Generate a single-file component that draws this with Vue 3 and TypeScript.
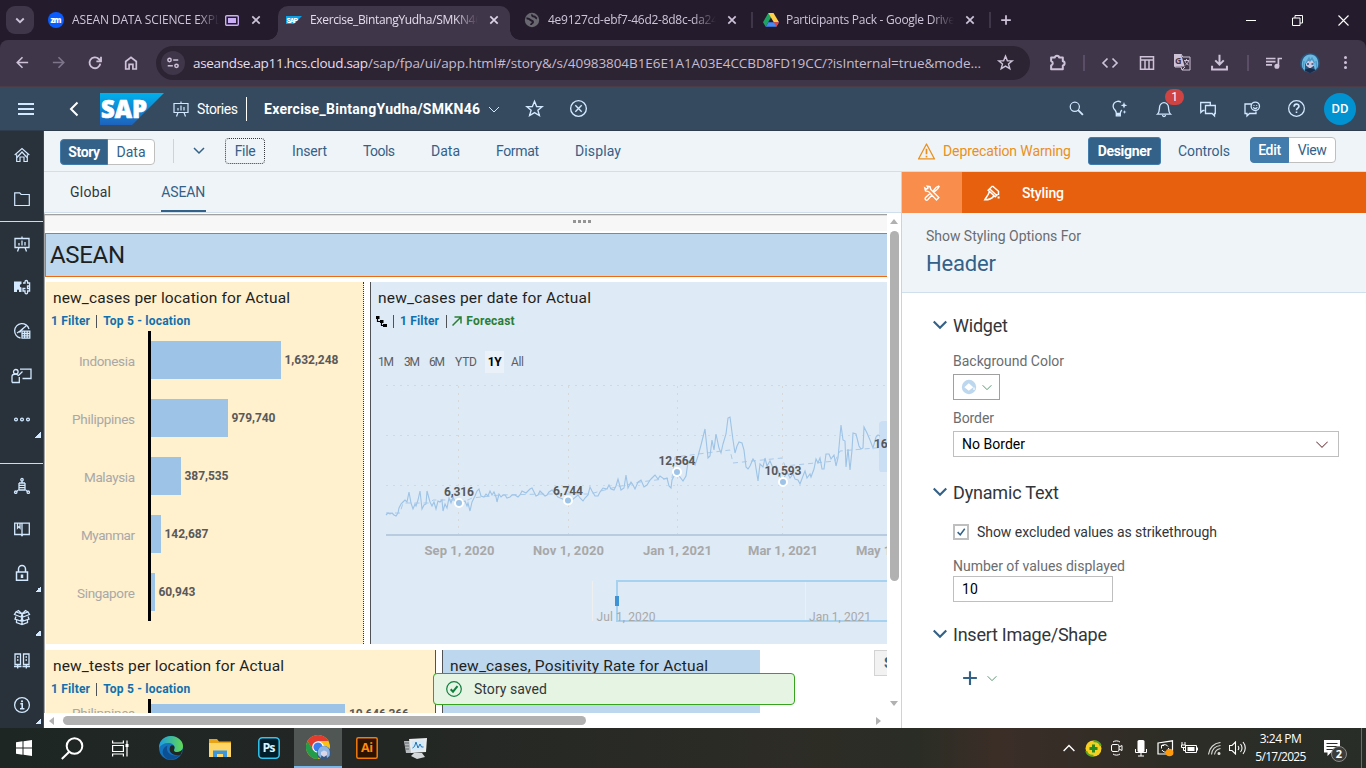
<script setup lang="ts">
import { h, type Directive } from 'vue'

/* Spreads the letters of a label over a given width in pixels. */
const vFit: Directive<HTMLElement, number> = {
  mounted(el, { value }) {
    const range = document.createRange()
    range.selectNodeContents(el)
    const natural = range.getBoundingClientRect().width
    const gaps = Math.max(1, (el.textContent ?? '').trim().length - 1)
    el.style.letterSpacing = `${((value - natural) / gaps).toFixed(3)}px`
  },
}

const glyphs: Record<string, string> = {
  chevron: '<path d="M3 6l5 5 5-5"/>',
  close: '<path d="M4.300 4.300l7.400 7.400M11.700 4.300l-7.400 7.400"/>',
  plus: '<path d="M8 2.500v11M2.500 8h11"/>',
  left: '<path d="M14 8H2.600M8 2.400L2.400 8 8 13.600"/>',
  right: '<path d="M2 8h11.400M8 2.400L13.600 8 8 13.600"/>',
  reload: '<path d="M13.300 8.600A5.400 5.400 0 1 1 11.800 4l2 2"/><path d="M14 1.800V6.400H9.400"/>',
  home: '<path d="M2.700 6.500L8 2.300l5.300 4.200V14h-3.400V9.300H6.100V14H2.700z"/>',
  tune: '<circle cx="4" cy="4.600" r="1.900"/><path d="M8.200 4.600H14"/><circle cx="12" cy="11.200" r="1.900"/><path d="M2 11.200h5.800"/>',
  star: '<path d="M8 1.200l2 4.900 5.200.2-4 3.300 1.400 5L8 11.800l-4.600 2.800 1.400-5-4-3.300L6 6.100z"/>',
  puzzle: '<path d="M2 3.300h3.500a2 1.700 0 0 1 4 0H13v3.500a1.700 2 0 0 1 0 4V14.300H2v-3.500a2.200 2.200 0 0 0 0-4.200z" stroke-linejoin="round"/>',
  code: '<path d="M5.500 3.500L1 8l4.500 4.500M10.500 3.500L15 8l-4.500 4.500"/>',
  layout: '<path d="M1.500 1.800h13v12.500h-13zM1.500 5h13M6 5v9.300M10 5v9.300"/>',
  download: '<path d="M8 .6v9M4 6l4 4 4-4M1 11v3.500h14V11"/>',
  playlist: '<path d="M0 3.500h9.500M0 6.700h9.500M0 9.900h6M12.400 11V3.500H16"/><circle cx="10.900" cy="11.300" r="1.700" fill="currentColor"/>',
  dots: '<g fill="currentColor" stroke="none"><circle cx="8" cy="2.700" r="1.600"/><circle cx="8" cy="8" r="1.600"/><circle cx="8" cy="13.300" r="1.600"/></g>',
  menu: '<path d="M0 3h16M0 8h16M0 13h16"/>',
  back: '<path d="M11.500 1.500L5 8l6.500 6.500"/>',
  board: '<path d="M1 2.500h14v9H1zM8 .500v2M5 11.500L3.500 15.500M11 11.500l1.500 4M5 9.500V7M8 9.500v-5M11 9.500V6"/>',
  circlex: '<circle cx="8" cy="8" r="7.400"/><path d="M5 5l6 6M11 5l-6 6"/>',
  search: '<circle cx="6.200" cy="6.200" r="4.900"/><path d="M9.800 9.800l5 5" stroke-width="2"/>',
  bulb: '<path d="M9 1.300A4.800 4.800 0 0 0 3 9c1 1.200 1.300 1.800 1.300 3.400h4C8.300 11 9 10 9.800 9M4.300 12.400v2.400h4v-2.400"/><path d="M12 1l.9 2.400 2.400.9-2.400.9L12 7.600l-.9-2.400-2.400-.9 2.400-.9zM12.500 9l.5 1.500 1.500.5-1.500.5-.5 1.500-.5-1.500-1.500-.5 1.500-.5z" fill="currentColor" stroke="none"/><path d="M4.300 13.600h4" stroke-width="2"/>',
  bell: '<path d="M1.500 13.200C3.500 11.500 3.300 9 3.500 6.500A4.500 4.800 0 0 1 12.500 6.500C12.700 9 12.500 11.500 14.500 13.200zM6.500 14c0 2 3 2 3 0"/>',
  chat: '<path d="M4.500 9.500H3L.8 11.500V9.500H.7v-8h9.600V4M5.500 4.500h9.800v8h-.8v2.400l-2.400-2.400H5.500z"/>',
  feedback: '<path d="M7.500 3H1v9.500h2V15l2.500-2.500H12V10.500"/><circle cx="11.300" cy="5.300" r="4.200"/><path d="M9.300 6.200c.8 1.700 3.200 1.700 4 0M10 4v.8M12.600 4v.8"/>',
  help: '<circle cx="8" cy="8" r="7.400"/><path d="M5.700 6.300C5.700 3 10.400 3.200 10.300 6 10.200 7.600 8 7.600 8 9.600M8 10.800v1.500" stroke-width="1.500"/>',
  house: '<path d="M.7 8L8 1.500 15.300 8M2.700 7.500V14.500H6v-4.500h4v4.500h3.300V7.500"/><path d="M3 10.500L8 5l5 5.500"/>',
  folder: '<path d="M.7 1.800h5l1.400 1.700h8.200v11H.7z"/>',
  parts: '<path d="M0 2.500h7.500V5a1.700 1.700 0 1 0 0 3.400v4.600H5v-1.500a1 1 0 0 0-2 0V13H0z" fill="currentColor" stroke="none"/><path d="M9 4h2V2.800a1.300 1.300 0 0 1 2.600 0V4h2v8h-2v1.500a1.300 1.300 0 0 1-2.600 0V12H9V9.500h2.500M15.500 7h-2v2.500h2"/>',
  gauge: '<path d="M15 6A7.300 7.300 0 1 0 6.500 15M3 10l3-2 6-5M5.500 9.500L9 5.500"/><path d="M8 8.200h7.800v7H8zM8 10.500h7.800M8 12.800h7.800M10.600 8.200v7M13.200 8.200v7"/>',
  present: '<path d="M6 2.200h11v9.300H8.500M-2 15.500V9.500C-2 7.500 0 7 2 7L4.500 8.500 8.500 4.500M5.300 10v5.500H-2"/><circle cx="1.800" cy="4.800" r="2.300"/>',
  more: '<circle cx="2" cy="8.500" r="1.400"/><circle cx="8" cy="8.500" r="1.400"/><circle cx="14" cy="8.500" r="1.400"/>',
  model: '<circle cx="8" cy="1.700" r="1.200"/><path d="M8 3v1.500M5 5h6M4.700 7.300h6.600M4.700 9.600h6.600M5 12h6M5 5v7M11 5v7M4.500 12l-2 1.500M11.500 12l2 1.500"/><circle cx="1.700" cy="14.200" r="1.200"/><circle cx="14.300" cy="14.200" r="1.200"/>',
  book: '<path d="M8 2.200H.7v11.300H7l1 1.200 1-1.200h6.300V2.200zV14M3.500 2.200v5l1.300-1.300L6 7.200v-5"/>',
  lock: '<path d="M2.500 7h11v8.200h-11zM4.500 7V4a3.500 3.500 0 0 1 7 0v3" stroke-width="1.500"/><path d="M8 9.500v3.500" stroke-width="2.500"/>',
  box: '<path d="M8 5L2 3 .500 5.500 7 8l1-3 1 3 6.500-2.500L14 3zM8 5L4.500 1.500 2 3M8 5l3.500-3.500L14 3M2 7.500l-1 2.500 5.800 2L8 8.500 9.200 12 15 10l-1-2.500M2.500 11v2.500L8 15.500l5.500-2V11M8 8.500v7"/>',
  servers: '<path d="M1 1h5.500v10.500H1zM9.500 1H15v10.500H9.500zM3 4h1.500M3 7h1.500M11.500 4H13M11.500 7H13M0 13.500h7.500M8.500 13.500H16M3.700 11.500V15.500M12.300 11.500v4"/>',
  info: '<circle cx="8" cy="8" r="7.400"/><path d="M6.300 6.800H8.200V11.500M6 11.800h4.400" stroke-width="1.600"/><circle cx="8" cy="4.300" r="1.100" fill="currentColor" stroke="none"/>',
  warning: '<path d="M8 .9L15.500 15H.5z" stroke-linejoin="round"/><path d="M8 5.500v5M8 12v1.600" stroke-width="1.600"/>',
  tools: '<path d="M4.600 6.600L1.500 6 .8 3l1.800 1.200L4 3 3.200 1.200 6 1.700l.8 2.800 8 8-2.300 2.500zM9 6.300l3-3.800L14.600 1l.5.500L13.500 4 9.800 7.200M6.300 8.300l-5 4.500c-.8 1.300.9 3 2.200 2.200L8 10"/>',
  brush: '<path d="M8.500 1L4.200 5.200l7 6.500 2.300-2.300M8.500 1l6 5.300V10M5.500 6.500C4.500 10 2.500 11.800.8 14.800 4 14.800 8 14 9.800 11M5.500 3.800l7 6.500"/><path d="M14.600 11.500v2" stroke-width="2"/>',
  check: '<path d="M3.500 8.200L7 11.700l6-8"/>',
  fill: '<circle cx="8" cy="8" r="7.200" fill="#bdd7ee" stroke="none"/><path d="M3.300 8.300l4.500-4 4.500 4-4.500 3.500z" fill="#fff" stroke="none"/><path d="M13 8.500v2.500" stroke="#fff"/>',
}

interface IconProps { n: string; s?: number; w?: number }
const Icon = (p: IconProps) =>
  h('svg', {
    class: 'icon', width: p.s ?? 16, height: p.s ?? 16, viewBox: '0 0 16 16', fill: 'none',
    stroke: 'currentColor', 'stroke-width': p.w ?? 1.2, overflow: 'visible', innerHTML: glyphs[p.n],
  })
Icon.props = { n: String, s: Number, w: Number }

const sideTop = ['house', 'folder']
const sideMid = ['board', 'parts', 'gauge', 'present', 'more']
const sideLow = ['model', 'book', 'lock', 'box', 'servers', 'info']
const flyouts = ['more', 'lock', 'box', 'info']

const bars = [
  { name: 'Indonesia', value: '1,632,248', size: 130, lw: 56, vw: 54 },
  { name: 'Philippines', value: '979,740', size: 77, lw: 63, vw: 44 },
  { name: 'Malaysia', value: '387,535', size: 30, lw: 51, vw: 44 },
  { name: 'Myanmar', value: '142,687', size: 10, lw: 54, vw: 44 },
  { name: 'Singapore', value: '60,943', size: 4, lw: 58, vw: 37 },
]

const series =
  '386,515 388,513 390,514 392,513 394,515 396,516 398,513 399,508 401,504 403,502 405,500 407,502 409,492 411,503 413,509 415,504 416,506 418,500 420,491 422,509 424,505 426,504 427,491 430,502 432,506 434,502 436,509 438,501 440,502 442,500 443,511 445,504 447,508 449,498 451,503 453,497 456,504 459,503 462,502 465,501 467,506 468,503 470,511 472,502 475,496 477,491 479,489 481,496 484,497 486,494 488,496 490,491 492,495 494,492 496,497 497,502 499,494 501,497 503,495 505,495 507,498 510,497 512,495 515,495 518,497 520,495 522,491 524,492 526,493 528,491 530,489 532,488 534,492 536,496 538,495 540,491 542,493 545,496 547,495 549,492 552,490 558,497 565,500 572,500 578,495 580,498 583,501 585,498 588,495 590,487 592,491 595,496 598,496 600,492 603,488 607,489 609,485 611,489 614,490 616,486 618,479 621,490 624,488 626,475 628,488 631,482 633,485 635,489 638,482 641,480 644,487 647,485 650,480 652,478 655,475 658,479 660,476 664,479 667,478 669,486 671,488 672,480 675,474 677,472 680,477 683,481 686,476 688,462 691,460 695,465 698,456 701,445 703,437 705,429 708,458 710,456 712,440 714,450 716,434 719,448 721,453 723,444 726,434 728,418 730,417 733,440 735,453 737,446 739,442 742,443 744,450 746,467 748,469 750,466 753,459 755,462 758,481 760,464 763,467 765,458 767,466 770,461 773,468 776,466 779,473 782,481 784,478 787,472 790,478 793,474 795,479 798,480 800,484 803,476 805,471 807,478 810,474 811,477 814,469 816,459 818,463 820,458 822,469 824,469 826,454 829,454 831,459 834,455 836,466 838,458 841,425 843,440 845,441 846,467 848,449 850,470 852,450 853,433 856,434 859,446 861,449 863,448 864,427 867,433 870,440 873,448 876,437 878,435 880,436'
const average =
  '386,513 400,513 403,503 430,503 433,500 468,500 472,498 500,495 545,494 590,494 612,488 640,482 672,478 675,457 730,450 733,463 782,458 785,466 835,461 840,451 887,447'

const markers = [
  { x: 459, y: 503, label: '6,316', by: 496, w: 30 },
  { x: 568, y: 500.5, label: '6,744', by: 494.5, w: 30 },
  { x: 677, y: 472, label: '12,564', by: 465, w: 37 },
  { x: 783, y: 482, label: '10,593', by: 475, w: 37 },
]
const months = [
  { x: 424.5, label: 'Sep 1, 2020', w: 70 },
  { x: 533, label: 'Nov 1, 2020', w: 71 },
  { x: 643, label: 'Jan 1, 2021', w: 69 },
  { x: 748, label: 'Mar 1, 2021', w: 70 },
  { x: 856, label: 'May 1, 2021', w: 71 },
]
const menus = [
  { t: 'Insert', w: 35 }, { t: 'Tools', w: 32 }, { t: 'Data', w: 29 }, { t: 'Format', w: 43 }, { t: 'Display', w: 46 },
]
</script>

<template>
  <div class="screen">
    <header class="tabs">
      <div class="tab-search"><Icon n="chevron" :s="12" :w="2.4" /></div>
      <svg width="16" height="16" viewBox="0 0 16 16"><circle cx="8" cy="8" r="8" fill="#0b5cff" /><text x="2.500" y="10.500" class="zm" textLength="11">zm</text></svg>
      <span class="tab-text"><span v-fit="149">ASEAN DATA SCIENCE EXPL</span></span>
      <svg width="14" height="11" viewBox="0 0 14 11"><rect x=".7" y=".7" width="12.600" height="9.600" rx="1" fill="none" stroke="#c9aef5" stroke-width="1.400" /><rect x="3" y="3" width="8" height="5" fill="#c9aef5" /></svg>
      <Icon n="close" :s="16" :w="1.7" />
      <div class="tab-active">
        <svg width="16" height="8" viewBox="0 0 16 8"><path d="M0 0h16L8 8H0z" fill="#0aa0e8" /><text x=".5" y="6.500" class="mini-sap" textLength="11.500">SAP</text></svg>
        <span class="tab-text"><span v-fit="172">Exercise_BintangYudha/SMKN46</span></span>
        <Icon n="close" :s="16" :w="1.7" />
      </div>
      <svg width="16" height="16" viewBox="0 0 16 16"><circle cx="8" cy="8" r="7.200" fill="#696770" /><path d="M2.500 6.500c2-.5 3 .5 4 1.500s2.500.5 2.500 2-2 1-2 3M8.500 2.500c-1 1 0 2 1.500 2s1 1.500 3 2" stroke="#241c2c" stroke-width="2" fill="none" /></svg>
      <span class="tab-text"><span v-fit="170">4e9127cd-ebf7-46d2-8d8c-da24</span></span>
      <Icon n="close" :s="16" :w="1.7" />
      <i class="tab-line"></i>
      <svg width="16" height="14" viewBox="0 0 16 14"><path d="M5.300 0h5.200L5.200 9.300 2.700 13.800 0 9.300z" fill="#1ea362" /><path d="M5.300 0h5.200L16 9.300h-5.200z" fill="#ffcf48" /><path d="M5.200 9.300H16l-2.700 4.500H2.700z" fill="#4688f4" /><path d="M10.800 9.300H16l-2.700 4.500z" fill="#ea4335" /></svg>
      <span class="tab-text"><span v-fit="169">Participants Pack - Google Drive</span></span>
      <Icon n="close" :s="16" :w="1.7" />
      <i class="tab-line"></i>
      <Icon n="plus" :s="14" :w="2" />
      <svg width="10" height="10"><path d="M0 5.500h10" stroke="#fff" /></svg>
      <svg width="11" height="11" fill="none" stroke="#fff"><path d="M.5 3h7.500v7.500H.5zM3 3V.5h7.500V8H8" /></svg>
      <svg width="11" height="11" fill="none" stroke="#fff" stroke-width="1.100"><path d="M.5.5l10 10M10.500.5l-10 10" /></svg>
    </header>

    <div class="browser">
      <Icon n="left" :s="15" :w="1.7" />
      <Icon n="right" :s="15" :w="1.7" class="dim" />
      <Icon n="reload" :s="16" :w="1.8" />
      <Icon n="home" :s="16" :w="1.7" />
      <div class="omnibox">
        <i class="site"><Icon n="tune" :s="14" :w="1.7" /></i>
        <span class="host" v-fit="175">aseandse.ap11.hcs.cloud.sap</span>
        <span class="path" v-fit="613">/sap/fpa/ui/app.html#/story&amp;/s/40983804B1E6E1A1A03E4CCBD8FD19CC/?isInternal=true&amp;mode...</span>
        <Icon n="star" :s="15" :w="1.5" />
      </div>
      <Icon n="puzzle" :s="17" :w="1.9" />
      <i class="tool-line"></i>
      <Icon n="code" :s="16" :w="1.7" />
      <Icon n="layout" :s="16" :w="1.5" />
      <svg width="17" height="17" viewBox="0 0 17 17"><path d="M1 0h6l1.800 3h7.200v13H8l-1-3H1z" fill="none" stroke="#cdc2d8" /><path d="M0 0h7l3.700 12.500H0z" fill="#cdc2d8" /><text x="1" y="9.500" class="g-letter">G</text><path d="M10 6.500h5M12.500 5v1.500M11 7c.5 2 2 3.500 3.500 4M14.500 7c-.5 2-2 3.500-3 4M8 16l3-3" stroke="#cdc2d8" fill="none" /></svg>
      <Icon n="download" :s="17" :w="1.9" />
      <i class="tool-line"></i>
      <Icon n="playlist" :s="16" :w="1.700" />
      <svg width="20" height="20" viewBox="0 0 20 20"><circle cx="10" cy="10" r="10" fill="#27557f" /><path d="M2 14C1 5 6 1 11 1.500c6 .5 8 6 7 12l-3 4-2-8-5-3-3 5v7z" fill="#6db9e0" /><path d="M6 9.500c2-3 6-3 8 0v3L10 15.500l-4-3z" fill="#cfc8dc" /><path d="M6 10l3-5 1 3 2-3 2.500 5M4 8L3 15M16 8l1 7" stroke="#4a97c9" stroke-width="1.300" fill="none" /><path d="M7 11h2M11.500 11h2" stroke="#1f4f8c" stroke-width="1.700" /><path d="M4 17l6-2 6 2-6 3z" fill="#1a2945" /></svg>
      <Icon n="dots" :s="15" />
    </div>

    <header class="shell">
      <Icon n="menu" :s="16" :w="2" />
      <Icon n="back" :s="16" :w="2" />
      <svg width="64" height="32" viewBox="0 0 64 32">
        <defs><linearGradient id="sapfill" x2="0" y2="1"><stop stop-color="#00b1eb" /><stop offset="1" stop-color="#1e62be" /></linearGradient></defs>
        <path d="M0 0h64L32 32H0z" fill="url(#sapfill)" />
        <text x="1" y="25" class="sap" textLength="46" lengthAdjust="spacingAndGlyphs">SAP</text>
      </svg>
      <Icon n="board" />
      <span v-fit="41">Stories</span>
      <i class="shell-line"></i>
      <b v-fit="216">Exercise_BintangYudha/SMKN46</b>
      <Icon n="chevron" :s="16" :w="1" />
      <Icon n="star" :s="17" :w="1.3" />
      <Icon n="circlex" :s="17" :w="1.3" />
      <Icon n="search" :s="15" :w="1.3" />
      <Icon n="bulb" :s="16" :w="1.3" />
      <div class="bell"><Icon n="bell" :s="16" :w="1.300" /><span class="count">1</span></div>
      <Icon n="chat" :s="16" :w="1.3" />
      <Icon n="feedback" :s="16" :w="1.300" />
      <Icon n="help" :s="17" :w="1.200" />
      <div class="user">DD</div>
    </header>

    <div class="app">
      <nav class="side">
        <div v-for="n in sideTop" :key="n" class="side-item"><Icon :n="n" /></div>
        <div class="side-group">
          <div v-for="n in sideMid" :key="n" class="side-item"><Icon :n="n" :w="1.300" /><i v-if="flyouts.includes(n)" class="fly"></i></div>
        </div>
        <div class="side-group low">
          <div v-for="n in sideLow" :key="n" class="side-item"><Icon :n="n" :w="1.300" /><i v-if="flyouts.includes(n)" class="fly"></i></div>
        </div>
      </nav>

      <div class="work">
        <div class="toolbar">
          <div class="seg"><b><span v-fit="32">Story</span></b><span><span v-fit="29">Data</span></span></div>
          <i class="bar-line"></i>
          <Icon n="chevron" :s="16" :w="1.5" class="fold" />
          <div class="file"><span v-fit="21">File</span></div>
          <span v-for="m in menus" :key="m.t" v-fit="m.w">{{ m.t }}</span>
          <Icon n="warning" :s="17" :w="1.2" class="warn" />
          <span class="warn" v-fit="128">Deprecation Warning</span>
          <div class="designer"><b v-fit="54">Designer</b></div>
          <span v-fit="52">Controls</span>
          <div class="seg mode"><b><span v-fit="23">Edit</span></b><span><span v-fit="29">View</span></span></div>
        </div>

        <div class="body">
          <section class="story">
            <div class="pages"><span v-fit="41">Global</span><span class="on"><span v-fit="44">ASEAN</span></span></div>
            <div class="stage">
              <div class="canvas">
                <div class="grip"><i></i><i></i><i></i><i></i></div>
                <div class="page-head"><span v-fit="75">ASEAN</span></div>
                <div class="row">
                  <article class="card cream dotted">
                    <h3 v-fit="237">new_cases per location for Actual</h3>
                    <div class="filters"><span v-fit="39">1 Filter</span><i></i><span v-fit="87">Top 5 - location</span></div>
                    <svg class="bars" width="317" height="313" viewBox="46 331 317 313">
                      <g v-for="(b, i) in bars" :key="b.name">
                        <text class="cat" :x="135 - b.lw" :y="366 + i * 58" :textLength="b.lw">{{ b.name }}</text>
                        <rect x="151" :y="341 + i * 58" :width="b.size" height="38" fill="#9dc3e6" />
                        <text class="val" :x="154.500 + b.size" :y="364 + i * 58" :textLength="b.vw">{{ b.value }}</text>
                      </g>
                      <rect x="148" y="331" width="3" height="290" />
                    </svg>
                  </article>
                  <article class="card sky wide">
                    <h3 v-fit="213">new_cases per date for Actual</h3>
                    <div class="filters second">
                      <svg width="11" height="11"><path d="M0 0h3.500v3H0zM4 4h3.500v3H4zM7 8h4v3H7z" /><path d="M1.500 2v3.500H5M5.500 5v4.500H8" fill="none" stroke="#000" stroke-width="1.200" /></svg>
                      <i></i><span v-fit="39">1 Filter</span><i></i>
                      <svg class="green" width="10" height="10"><path d="M.5 9.500L8.500 1.500M2.500 1H9v6.500" fill="none" stroke="currentColor" stroke-width="1.500" /></svg>
                      <span class="green" v-fit="48.500">Forecast</span>
                    </div>
                    <div class="period">
                      <span v-fit="16">1M</span><span v-fit="16">3M</span><span v-fit="16">6M</span><span v-fit="22">YTD</span><b><span v-fit="14">1Y</span></b><span v-fit="13">All</span>
                    </div>
                    <svg class="line" width="516" height="271" viewBox="371 373 516 271">
                      <g class="gridlines"><path d="M386 385.500H887M386 435.500H887M386 485.500H887M458.500 386V534M568.500 386V534M677.500 386V534M782.500 386V534" /></g>
                      <path d="M386 535H887" stroke="#b9cbde" stroke-width="2" />
                      <path d="M879 425q0-4 4-4h4v51h-6q-2 0-2-4z" fill="#cadff3" />
                      <polyline :points="average" class="avg" />
                      <polyline :points="series" class="trend" />
                      <g v-for="m in markers" :key="m.label">
                        <circle :cx="m.x" :cy="m.y" r="4" fill="#9dc3e6" stroke="#fff" stroke-width="2" />
                        <text class="val" :x="m.x - m.w / 2" :y="m.by" :textLength="m.w">{{ m.label }}</text>
                      </g>
                      <text class="val" x="874" y="448" textLength="37">16,285</text>
                      <text v-for="m in months" :key="m.label" class="month" :x="m.x" y="555" :textLength="m.w">{{ m.label }}</text>
                      <path d="M592.500 581V621M805.500 581V621" stroke="#efefef" />
                      <path d="M900 581H617V621H900" fill="none" stroke="#a6d2ef" stroke-width="2" />
                      <rect x="615" y="596" width="4" height="10" fill="#3d93d6" />
                      <text class="tick" x="596.500" y="621" textLength="59">Jul 1, 2020</text>
                      <text class="tick" x="809" y="621" textLength="62">Jan 1, 2021</text>
                    </svg>
                  </article>
                </div>
                <div class="row">
                  <article class="card cream tests">
                    <h3 v-fit="231">new_tests per location for Actual</h3>
                    <div class="filters"><span v-fit="39">1 Filter</span><i></i><span v-fit="87">Top 5 - location</span></div>
                    <svg width="389" height="14" viewBox="46 699 389 14">
                      <text class="cat" x="72" y="718" textLength="63">Philippines</text>
                      <rect x="148" y="699" width="3" height="14" /><rect x="151" y="704" width="194" height="9" fill="#9dc3e6" />
                      <text class="val" x="349" y="718" textLength="60">10,646,366</text>
                    </svg>
                  </article>
                  <article class="card blue"><h3 v-fit="258">new_cases, Positivity Rate for Actual</h3></article>
                  <div class="chip"><b>S</b></div>
                </div>
              </div>
              <div class="vscroll"><i class="up"></i><i class="vthumb"></i><i class="down"></i></div>
              <div class="hscroll"><i class="prev"></i><i class="hthumb"></i><i class="next"></i></div>
            </div>
          </section>

          <aside class="panel">
            <div class="panel-tabs"><div class="panel-tool"><Icon n="tools" :w="1.4" /></div><Icon n="brush" :w="1.5" /><b v-fit="42">Styling</b></div>
            <div class="panel-head"><span v-fit="155">Show Styling Options For</span><strong v-fit="70">Header</strong></div>
            <div class="panel-body">
              <h2><Icon n="chevron" :s="20" :w="1.7" /><span v-fit="55">Widget</span></h2>
              <label class="l1" v-fit="111">Background Color</label>
              <div class="swatch"><Icon n="fill" /><Icon n="chevron" :s="14" :w="1" class="drop" /></div>
              <label class="l2" v-fit="41">Border</label>
              <div class="select"><span v-fit="63">No Border</span><Icon n="chevron" :s="18" :w=".9" /></div>
              <h2 class="h-dyn"><Icon n="chevron" :s="20" :w="1.7" /><span v-fit="106">Dynamic Text</span></h2>
              <div class="checkline"><i class="checkbox"><Icon n="check" :s="12" :w="2" /></i><span v-fit="240">Show excluded values as strikethrough</span></div>
              <label class="l3" v-fit="172">Number of values displayed</label>
              <div class="input"><span v-fit="16">10</span></div>
              <h2 class="h-ins"><Icon n="chevron" :s="20" :w="1.7" /><span v-fit="154">Insert Image/Shape</span></h2>
              <div class="add"><Icon n="plus" :s="20" :w="1.700" /><Icon n="chevron" :s="14" :w="1" class="drop" /></div>
            </div>
          </aside>
        </div>
      </div>
      <div class="toast"><svg width="16" height="16" viewBox="0 0 16 16" fill="none" stroke="#107e3e"><circle cx="8" cy="8" r="7.300" stroke-width="1.200" /><path d="M4.700 8.300L7 10.700l4.500-5.500" stroke-width="2" /></svg><span v-fit="73">Story saved</span></div>
    </div>

    <footer class="taskbar">
      <svg width="16" height="16"><path d="M0 2.300l6.500-1v6.200H0zM7.500 1.200L16 0v7.500H7.500zM0 8.500h6.500v6.200l-6.500-1zM7.500 8.500H16V16l-8.500-1.200z" fill="#fff" /></svg>
      <svg width="23" height="23" fill="none" stroke="#fff" stroke-width="2"><circle cx="13.500" cy="9" r="7.800" /><path d="M8 15L.8 22" /></svg>
      <svg width="17" height="17" fill="none" stroke="#fff" stroke-width="1.200"><path d="M.6.500v2.500h10.800V.500M.6 5.500h10.800v6H.6zM.6 16.500V14h10.800v2.500M15 .5v16" /><path d="M15 4v3" stroke-width="3" /></svg>
      <svg width="24" height="24" viewBox="0 0 24 24"><defs><linearGradient id="edgetop"><stop stop-color="#1b9de2" /><stop offset="1" stop-color="#62d94f" /></linearGradient></defs><circle cx="12" cy="12" r="12" fill="#1473bd" /><path d="M0 12C0 4 6 0 12 0s12 4.500 12 10c0 4-3 6-6 6-4 0-3-2-2.500-4C16 9 13 7 9 7S1.500 9 0 12z" fill="url(#edgetop)" /><path d="M8.500 9.500C6 16 12 21 21 19c-5 6-13 6-16 1s-.500-9 3.500-10.500z" fill="#0d4f93" /><path d="M15.500 12C15 14 14 16 18 16c3 0 5-1.500 6-3l-2.500 6C15 20 9 17 11 11c1-3 5-2 4.500 1z" fill="#202624" /></svg>
      <svg width="22" height="20" viewBox="0 0 22 20"><path d="M0 1h8l2 2.500h12V19H0z" fill="#e8a317" /><path d="M0 5h22v14H0z" fill="#fdd667" /><path d="M4 19v-6.500h14V19h-4v-3H8v3z" fill="#3a96dd" /></svg>
      <svg width="22" height="22" viewBox="0 0 22 22"><rect x=".8" y=".8" width="20.400" height="20.400" rx="3.500" fill="#001e2b" stroke="#31c5f0" stroke-width="1.500" /><text x="4.500" y="15" class="app-letter" textLength="13" fill="#d6f3ff">Ps</text></svg>
      <div class="task-on">
        <svg width="25" height="25" viewBox="0 0 25 25"><circle cx="12" cy="12" r="12" fill="#fbc116" /><path d="M1.600 6A12 12 0 0 1 22.400 6H12L6.800 15z" fill="#e33b2e" /><path d="M1.600 6A12 12 0 0 0 12 24L17 15H7z" fill="#229b4b" /><circle cx="12" cy="12" r="5.800" fill="#fff" /><circle cx="12" cy="12" r="4.600" fill="#3a7df0" /><circle cx="18" cy="18" r="7" fill="#35587f" /><path d="M12 20c-1-6 2-9 6-9s7 4 5.500 10l-2.500 2-1-6-4-1-1 7z" fill="#8cb4e1" /><path d="M15 17c2-2 4-2 6 0v3l-3 2-3-2z" fill="#d9d7e8" /></svg>
      </div>
      <svg width="22" height="22" viewBox="0 0 22 22"><rect x=".8" y=".8" width="20.400" height="20.400" rx="1.500" fill="#2d1300" stroke="#f47b0a" stroke-width="1.500" /><text x="5" y="15" class="app-letter" textLength="12" fill="#ff8a0f">Ai</text></svg>
      <svg width="24" height="22" viewBox="0 0 24 22"><path d="M0 4h7v12H2z" fill="#b7bbbd" /><path d="M1 6h4M1 9h4M1.500 12H5" stroke="#606668" /><path d="M5 2l18-1-1 14-15 1z" fill="#e9eced" /><path d="M7.500 4l13-.7-.8 9.700-11.200.7z" fill="#d5e9f8" /><path d="M8.500 11l2-1.500L12 5l2 6 2-4 1.500 3h2" stroke="#2077b8" fill="none" /><path d="M10 16h8l3 4-8 2-6-3z" fill="#d4d8da" /></svg>
      <svg width="12" height="8" fill="none" stroke="#fff" stroke-width="1.400"><path d="M.6 7L6 1.500 11.400 7" /></svg>
      <svg width="17" height="17" viewBox="0 0 17 17"><circle cx="8.500" cy="8.500" r="8" fill="#f6cf20" /><path d="M8.500 1.300C12 .8 15 3 15.800 6M8.500 15.700C5 16.200 2 14 1.200 11" stroke="#52a828" stroke-width="2" fill="none" /><path d="M8.500 4.500v8M4.500 8.500h8" stroke="#27891f" stroke-width="3" /></svg>
      <svg width="12" height="16" fill="none" stroke="#fff"><rect x=".5" y="4.500" width="7.500" height="7" rx="1.500" /><path d="M8 7l3-1.500v5L8 9M2 2c2-1.500 5-1.500 7 0M2 14c2 1.500 5 1.500 7 0" /></svg>
      <svg width="12" height="17"><rect x="2.500" y="0" width="7" height="12" rx="1.500" fill="#fff" /><path d="M.5 9v3.500h11V9M6 12.500V16M3 16h6" stroke="#fff" fill="none" /></svg>
      <svg width="17" height="17" viewBox="0 0 17 17"><path d="M1 3l14.500-2.200V14H1z" stroke="#fff" stroke-width="1.200" fill="none" /><path d="M4.500 8.500V5.500H7M4.500 5.500C7 4 10 4.500 11 6.500M11.500 8v3.500H9M11.500 11.500C9 13 6 12 5 10" stroke="#fff" fill="none" /><circle cx="12.500" cy="12.500" r="3.800" fill="#ff9a0a" /></svg>
      <svg width="17" height="12"><path d="M4.500 3.500h11v7h-11z" stroke="#fff" fill="none" /><path d="M6.500 5h7v4h-7zM15 5.500h2v3h-2z" fill="#fff" /><path d="M1 0v3M4 0v3M.5 3h4v2.500h-4zM2.500 5v3.500h2" stroke="#fff" fill="none" /></svg>
      <svg width="13" height="13" fill="none" stroke="#d9d9d6" stroke-width="1.100"><path d="M.5 12.500C1 6 6 1 12.500.5M3.500 12.500C4 7.500 7.500 4 12.500 3.500M6.500 12.500C7 9.500 9.500 7 12.500 6.500" /><circle cx="11" cy="11.500" r="1" fill="#fff" /></svg>
      <svg width="17" height="14" fill="none" stroke="#fff" stroke-width="1.100"><path d="M.5 4.500H3L6.500 1v12L3 9.500H.5zM9 5c1 1.200 1 2.800 0 4M11.500 3c2 2.200 2 5.800 0 8M14 1c3 3.500 3 8.500 0 12" /></svg>
      <div class="clock"><span v-fit="42">3:24 PM</span><span v-fit="51">5/17/2025</span></div>
      <div class="notes"><svg width="16" height="16"><path d="M0 0h16v12.500H7L3.500 16v-3.500H0z" fill="#fff" /><path d="M2.500 3.500h11M2.500 6.500h11M2.500 9.500h8" stroke="#2b2d27" /></svg><span class="note-count">2</span></div>
      <i class="peek"></i>
    </footer>
  </div>
</template>

<style>
body { margin: 0; overflow: hidden; }
</style>

<style scoped>
* { box-sizing: border-box; }
.screen { width: 1366px; height: 768px; display: flex; flex-direction: column; overflow: hidden; background: #241c2c; font-family: Roboto, "Noto Sans", sans-serif; font-size: 14px; white-space: nowrap; }
svg { display: block; flex: none; }
i { font-style: normal; display: block; }

.tabs { height: 40px; flex: none; display: grid; grid-template-columns: 42px 24px 153px 23px 30px 246px 24px 176px 27px 12px 23px 176px 27px 10px 247px 46px 46px 1fr; padding-left: 6px; align-items: center; color: #cdc2d8; font: 12px "Open Sans", sans-serif; background: #241c2c; }
.tab-search { width: 28px; height: 28px; border-radius: 9px; background: #40364a; display: flex; align-items: center; justify-content: center; }
.tab-text { overflow: hidden; width: 147px; line-height: 20px; color: #cfc5da; mask-image: linear-gradient(90deg, #000 86%, transparent); }
.tab-active { width: 232px; height: 34px; align-self: end; border-radius: 10px 10px 0 0; background: #40364a; display: grid; grid-template-columns: 24px 176px 1fr; align-items: center; padding: 0 0 6px 8px; position: relative; color: #dcd3e6; }
.tab-active .tab-text { width: 168px; color: #e4dcec; }
.tab-active::before, .tab-active::after { content: ""; position: absolute; bottom: 0; width: 10px; height: 10px; }
.tab-active::before { left: -10px; background: radial-gradient(circle at 0 0, transparent 9.5px, #40364a 10px); }
.tab-active::after { right: -10px; background: radial-gradient(circle at 100% 0, transparent 9.5px, #40364a 10px); }
.tabs > .tab-text:nth-of-type(n + 2) { width: 168px; }
.tab-line { width: 2px; height: 16px; background: #40364a; }
.zm { font: 800 8px "Open Sans"; fill: #fff; }
.mini-sap { font: 900 7px Roboto; fill: #fff; }

.browser { height: 47px; flex: none; background: #40364a; border-radius: 8px 8px 0 0; border-bottom: 1px solid #4c3c47; display: grid; grid-template-columns: 36px 36px 36px 33px 893px 34px 19px 37px 35px 37px 36px 19px 34px 38px 1fr; padding: 0 0 1px 15px; align-items: center; color: #cdc2d8; }
.dim { opacity: .45; }
.omnibox { width: 874px; height: 34px; border-radius: 17px; background: #2c2433; display: grid; grid-template-columns: 32px 175px 630px 1fr; align-items: center; padding-left: 5px; font: 13.500px "Open Sans", sans-serif; }
.site { width: 24px; height: 24px; border-radius: 50%; background: #40364a; display: grid; place-items: center; }
.host { color: #e6deed; }
.path { color: #c6bccf; }
.tool-line { width: 2px; height: 16px; background: #5a4e66; }
.g-letter { font: bold 9px "Open Sans"; fill: #40364a; }

.shell { height: 43px; flex: none; background: #354a5f; display: grid; grid-template-columns: 48px 34px 73px 24px 49px 18px 222px 40px 44px 499px 43px 44px 44px 44px 44px 36px 1fr; padding-left: 18px; align-items: center; color: #d1e8ff; }
.shell span, .shell b { color: #fff; justify-self: start; }
.shell > span, .shell > b { font-size: 14px; }
.shell > .icon:nth-child(2) { color: #fff; }
.sap { font: 900 25px "Open Sans", sans-serif; fill: #fff; stroke: #fff; stroke-width: .7; }
.shell-line { width: 1px; height: 24px; background: #fff; }
.bell { position: relative; }
.shell .count { position: absolute; left: 9px; top: -12px; width: 19px; height: 16px; border-radius: 8px; background: #d04343; font-size: 12px; line-height: 16px; text-align: center; }
.user { width: 32px; height: 32px; border-radius: 50%; background: #0092d1; color: #fff; font-size: 13px; font-weight: 500; display: grid; place-items: center; }

.app { height: 598px; flex: none; display: flex; position: relative; border-top: 1px solid #2f3c4e; }
.side { width: 44px; flex: none; background: #29313a; border-right: 1px solid #354a5f; color: #d1e8ff; padding-top: 2px; }
.side-item { height: 44px; display: grid; place-items: center; position: relative; }
.side-group { border-top: 1px solid #d5dadd; height: 242px; }
.side-group .side-item:first-child { height: 43px; }
.side-group.low { height: 265px; }
.fly { position: absolute; right: 2px; bottom: 3px; width: 6px; height: 6px; background: linear-gradient(135deg, transparent 50%, #d1e8ff 50%); }

.work { flex: 1; display: flex; flex-direction: column; background: #eff4f9; color: #346187; }
.toolbar { height: 41px; flex: none; display: grid; grid-template-columns: 113px 18px 34px 67px 71px 68px 65px 79px 343px 25px 145px 90px 72px 1fr; padding-left: 16px; align-items: center; justify-items: start; border-bottom: 1px solid #cfdfec; }
.fold { margin-top: -3px; }
.seg { height: 26px; display: flex; border: 1px solid #bfbfbf; border-radius: 4px; background: #fff; margin-top: 2px; }
.seg > * { display: grid; place-items: center; }
.seg > b { width: 48px; margin: -1px 0 -1px -1px; border-radius: 4px 0 0 4px; background: #346187; color: #fff; border: 1px solid #427cac; }
.seg > span { width: 46px; }
.mode { margin-top: -2px; }
.mode > b { width: 39px; background: #427cac; font-weight: 500; }
.bar-line { width: 1px; height: 24px; background: #cfd3d6; }
.file { width: 40px; height: 26px; border: 1px dotted #32363a; border-radius: 4px; display: grid; place-items: center; }
.warn { color: #e9901b; }
.designer { width: 73px; height: 28px; border: 1px solid #427cac; background: #346187; border-radius: 3px; color: #fff; display: grid; place-items: center; }
.body { flex: 1; display: flex; }
.story { width: 858px; display: flex; flex-direction: column; border-right: 1px solid #d0d3d6; }
.pages { height: 41px; flex: none; display: flex; padding-left: 26px; gap: 50px; border-bottom: 1px solid #cfdfec; line-height: 40px; }
.pages > span:first-child { color: #32363a; }
.pages .on { width: 45px; height: 40px; border-bottom: 2px solid #346187; display: flex; }
.stage { height: 515px; display: grid; grid-template: 500px 15px / 843px 14px; background: #fff; }
.canvas { overflow: hidden; border-left: 1px solid #a5a5a5; border-top: 1px solid #fff; color: #1d1f21; background: #fff; }
.grip { height: 17px; background: #f7f7f7; border-top: 1px solid #a0a0a0; box-shadow: inset 0 1px #dedede; margin-bottom: 2px; display: flex; gap: 2px; justify-content: center; align-items: flex-start; padding: 5px 0 0 232px; }
.grip i { width: 3px; height: 3px; background: #949494; }
.page-head { height: 44px; border: 1px solid #ee6a12; border-right: 0; background: #bdd7ee; font-size: 24px; line-height: 42px; padding-left: 4px; margin-bottom: 5px; }
.row { display: flex; gap: 6px; padding-left: 1px; margin-bottom: 6px; }
.card { flex: none; overflow: hidden; display: flex; flex-direction: column; align-items: flex-start; }
h3 { font-size: 15.500px; font-weight: 400; line-height: 20px; margin: 6px 0 0 7px; height: 26px; color: #1d1f21; }
.cream { background: #fff0ce; }
.dotted { width: 318px; height: 362px; border-right: 1px dotted #333; }
.sky { background: #deeaf6; width: 517px; border-left: 1px solid #505356; }
.tests { width: 390px; height: 63px; border-right: 1px solid #505356; }
.blue { width: 318px; height: 63px; background: #bdd7ee; border-left: 1px solid #505356; }
.filters { display: flex; align-items: center; height: 14px; padding-left: 5px; color: #1070ad; font-size: 12px; font-weight: 700; line-height: 14px; margin-bottom: 3px; }
.filters i { width: 1px; height: 13px; background: #505356; margin: 0 6px; }
.filters.second { margin-bottom: 23px; }
.second i:nth-of-type(1) { margin-right: 6px; }
.second i:nth-of-type(2) { margin: 0 5px 0 7px; }
.filters .green { color: #2c7d32; margin-right: 4px; }
.period { display: grid; grid-template-columns: 26px 25px 26px 30px 26px 20px; height: 22px; align-items: center; justify-items: start; font-size: 12px; color: #5b5e61; padding-left: 7px; }
.period b { width: 19px; height: 22px; background: #eaf1f9; color: #000; display: grid; place-items: center; }
.line { overflow: hidden; }
.cat { font-size: 13.500px; fill: #a8a8a8; }
.val { font-size: 12px; font-weight: 700; fill: #58595b; }
.month { font-size: 13px; font-weight: 700; fill: #a8a8a8; }
.tick { font-size: 12px; fill: #a8a8a8; }
.gridlines { stroke: #d6d7d9; stroke-dasharray: 2 5; fill: none; }
.trend { fill: none; stroke: #9dc3e6; stroke-width: 1.100; }
.avg { fill: none; stroke: #a9caea; stroke-width: 1; stroke-dasharray: 5 4; }
.chip { width: 30px; height: 26px; margin-left: 108px; flex: none; background: #f2f2f2; border: 1px solid #d3d3d3; padding-left: 9px; line-height: 24px; color: #346187; }
.vscroll { display: flex; flex-direction: column; align-items: flex-start; padding: 6px 0 0 3px; }
.up { border: 4.500px solid transparent; border-top: 0; border-bottom: 5px solid #b1b1b1; }
.vthumb { width: 9px; height: 350px; border-radius: 5px; background: #b1b1b1; margin: 7px 0 120px; }
.down { border: 4.500px solid transparent; border-bottom: 0; border-top: 5px solid #b1b1b1; }
.hscroll { grid-column: 1 / 3; display: flex; align-items: center; padding-left: 5px; }
.prev { border: 4.500px solid transparent; border-left: 0; border-right: 5px solid #b1b1b1; }
.hthumb { width: 523px; height: 9px; border-radius: 5px; background: #b1b1b1; margin: 0 290px 0 9px; }
.next { border: 4.500px solid transparent; border-right: 0; border-left: 5px solid #b1b1b1; }

.panel { flex: 1; background: #fff; color: #32363a; }
.panel-tabs { height: 41px; background: #e7600e; color: #fff; display: grid; grid-template-columns: 82px 38px 1fr; align-items: center; justify-items: start; }
.panel-tabs b { font-weight: 500; }
.panel-tool { width: 60px; height: 41px; background: #f88d4c; display: grid; place-items: center; }
.panel-head { height: 80px; background: #eff4f9; border-bottom: 1px solid #cfdfec; padding: 13px 24px; display: flex; flex-direction: column; align-items: flex-start; line-height: 20px; color: #6a6d70; }
.panel-head strong { font-size: 22px; font-weight: 400; line-height: 36px; color: #346187; }
.panel-body { padding-left: 51px; display: flex; flex-direction: column; align-items: flex-start; color: #32363a; }
h2 { margin: 20px 0 0 -23px; height: 24px; font-size: 18px; font-weight: 400; display: flex; align-items: center; gap: 3px; }
h2 .icon { color: #346187; margin-top: -3px; }
label { color: #6a6d70; line-height: 20px; }
.l1 { margin: 14px 0 3px; }
.swatch { width: 47px; height: 26px; border: 1px solid #a0a0a0; display: flex; align-items: center; padding-left: 7px; gap: 3px; }
.drop { color: #3f8a5c; }
.l2 { margin: 8px 0 3px; }
.select { width: 386px; height: 26px; border: 1px solid #bfbfbf; display: flex; align-items: center; justify-content: space-between; padding: 0 7px 0 8px; color: #000; }
.select .icon { color: #7a4a4c; }
.h-dyn { margin-top: 23px; }
.checkline { display: flex; gap: 8px; align-items: center; margin-top: 20px; height: 16px; }
.checkbox { width: 16px; height: 16px; border: 2px solid #bfbfbf; color: #346187; }
.l3 { margin-top: 16px; }
.input { width: 160px; height: 26px; border: 1px solid #bfbfbf; display: flex; align-items: center; padding-left: 8px; color: #000; }
.h-ins { margin-top: 20px; }
.add { display: flex; align-items: center; gap: 5px; color: #346187; margin: 22px 0 0 7px; }

.toast { position: absolute; left: 433px; top: 542px; width: 362px; height: 32px; border: 1px solid #36a41d; border-radius: 4px; background: #e5f4e3; color: #32363a; display: flex; align-items: center; gap: 12px; padding: 0 0 1px 12px; }

.taskbar { height: 40px; flex: none; display: grid; grid-template-columns: 45px 51px 47px 50px 49px 36px 62px 48px 659px 22px 26px 24px 22px 24px 27px 21px 26px 69px 37px 1fr; padding-left: 16px; align-items: center; background: linear-gradient(90deg, #1e2624 0%, #232724 30%, #2d2c26 58%, #2a2d25 67%, #3b2e27 73%, #362d27 78%, #2c2d26 86%, #292d28 100%); color: #fff; }
.task-on { width: 48px; height: 40px; background: #505654; border-bottom: 2px solid #76b9ed; display: grid; place-items: center; }
.app-letter { font: bold 12.500px "Open Sans", sans-serif; }
.clock { display: flex; flex-direction: column; align-items: center; font: 12px/18px "Open Sans", sans-serif; width: 51px; }
.notes { position: relative; }
.note-count { position: absolute; left: 7px; top: 6px; width: 16px; height: 16px; border-radius: 50%; background: #3c3d3a; border: 1px solid #8b8c89; font: bold 11px/14px "Open Sans", sans-serif; text-align: center; }
.peek { width: 1px; height: 40px; background: #6d6e69; }
</style>
